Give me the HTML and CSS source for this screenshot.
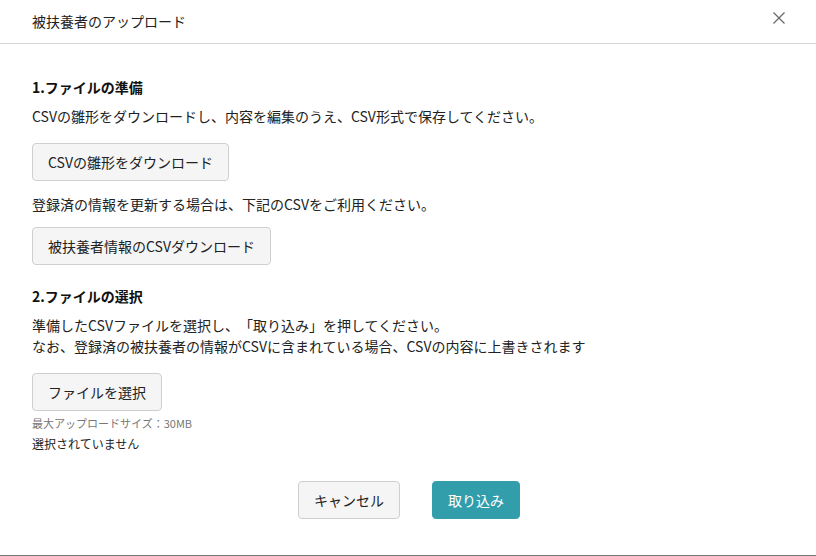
FILE: index.html
```html
<!DOCTYPE html>
<html lang="ja">
<head>
<meta charset="utf-8">
<title>被扶養者のアップロード</title>
<link rel="stylesheet" href="styles.css">
</head>
<body>
<div class="modal">
  <header class="modal-header">
    <h1 class="modal-title">被扶養者のアップロード</h1>
    <button class="close" aria-label="閉じる">
      <svg width="14" height="14" viewBox="0 0 14 14"><path d="M1.5 1.5 L12.5 12.5 M12.5 1.5 L1.5 12.5" stroke="#666" stroke-width="1.2" fill="none"/></svg>
    </button>
  </header>
  <main class="modal-body">
    <h2 class="step-title">1.ファイルの準備</h2>
    <p class="text t1">CSVの雛形をダウンロードし、内容を編集のうえ、CSV形式で保存してください。</p>
    <button class="btn b1">CSVの雛形をダウンロード</button>
    <p class="text t2">登録済の情報を更新する場合は、下記のCSVをご利用ください。</p>
    <button class="btn b2">被扶養者情報のCSVダウンロード</button>
    <h2 class="step-title s2">2.ファイルの選択</h2>
    <p class="text t1">準備したCSVファイルを選択し、「取り込み」を押してください。<br>なお、登録済の被扶養者の情報がCSVに含まれている場合、CSVの内容に上書きされます</p>
    <button class="btn b3">ファイルを選択</button>
    <p class="note">最大アップロードサイズ：30MB</p>
    <p class="status">選択されていません</p>
  </main>
  <footer class="modal-footer">
    <button class="btn cancel">キャンセル</button>
    <button class="btn primary">取り込み</button>
  </footer>
</div>
</body>
</html>
```
FILE: styles.css
```css
html, body {
  margin: 0;
  padding: 0;
  background: #fff;
}
body {
  font-family: "Noto Sans CJK JP", "Noto Sans", sans-serif;
  color: #222;
  font-size: 14px;
  text-spacing-trim: space-all;
}
.modal {
  width: 816px;
  height: 556px;
  box-sizing: border-box;
  border-bottom: 1px solid #777;
  display: flex;
  flex-direction: column;
}
.modal-header {
  height: 44px;
  box-sizing: border-box;
  border-bottom: 1px solid #d6d6d6;
  display: flex;
  align-items: center;
  justify-content: space-between;
  padding: 0 24px 2px 32px;
}
.modal-title {
  margin: 0;
  font-size: 14px;
  font-weight: 400;
  color: #222;
  line-height: 20px;
}
.close {
  border: 0;
  background: none;
  padding: 0;
  width: 14px;
  height: 14px;
  display: flex;
  margin-top: -6px;
  margin-right: 6px;
}
.modal-body {
  padding: 33px 32px 0;
  display: flex;
  flex-direction: column;
  align-items: flex-start;
}
.step-title {
  margin: 0;
  font-size: 14px;
  font-weight: 700;
  line-height: 21px;
  color: #111;
}
.s2 { margin-top: 21px; }
.text {
  margin: 8px 0 0;
  line-height: 21px;
}
.t2 { margin-top: 13px; }
.btn {
  font-family: inherit;
  font-size: 14px;
  color: #222;
  height: 38px;
  padding: 0 15px;
  border: 1px solid #cfcfcf;
  border-radius: 4px;
  background: #f5f5f5;
  line-height: 20px;
  text-spacing-trim: space-all;
}
.b1 { margin-top: 16px; }
.b2 { margin-top: 12px; }
.b3 { margin-top: 16px; }
.note {
  margin: 4px 0 0;
  font-size: 11px;
  line-height: 16px;
  color: #777;
}
.status {
  margin: 4px 0 0;
  font-size: 12px;
  line-height: 17px;
  color: #222;
}
.modal-footer {
  display: flex;
  justify-content: center;
  gap: 32px;
  margin-top: 29px;
  padding-left: 2px;
}
.cancel {
  width: 102px;
  padding: 0;
}
.primary {
  width: 88px;
  padding: 0;
  background: #329dab;
  border-color: #329dab;
  color: #fff;
}
```
